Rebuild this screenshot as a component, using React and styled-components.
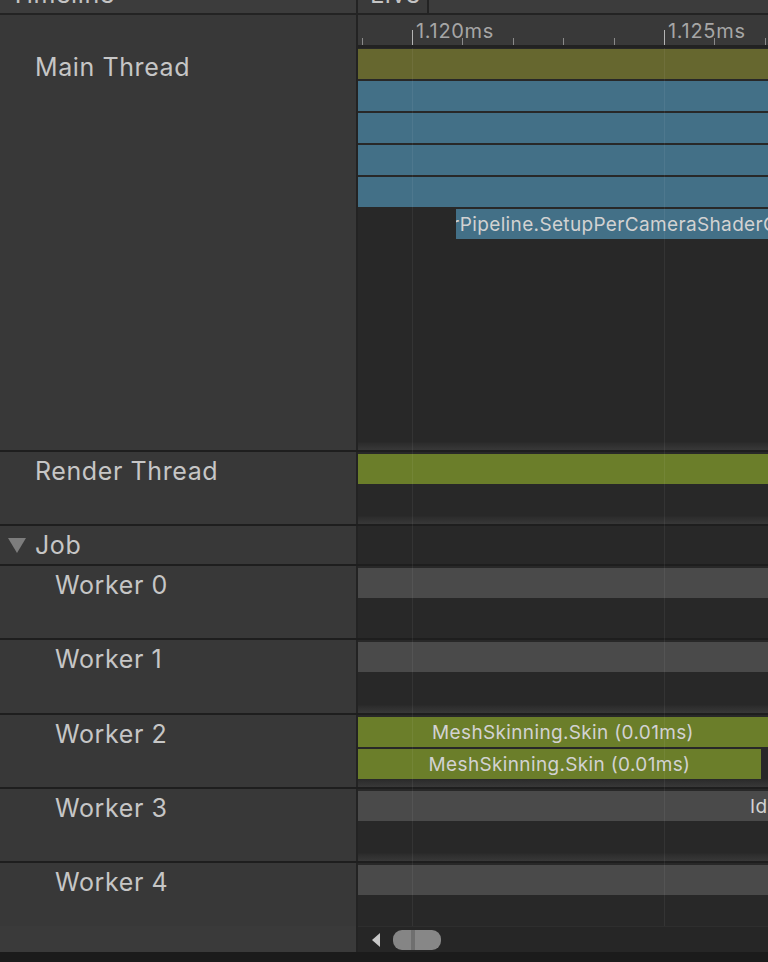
import styled, { createGlobalStyle } from 'styled-components';

const GlobalStyle = createGlobalStyle`
  body {
    margin: 0;
    background: #1b1b1b;
    font-family: Inter, 'Noto Sans', sans-serif;
  }
`;

const TICK_START = 54;
const TICK_STEP = 50.4;
const ticks = Array.from({ length: 9 }, (_, i) => i - 1).map((i) => ({
  x: Math.round(TICK_START + TICK_STEP * i),
  major: i % 5 === 0,
  label: `${(1.12 + i * 0.001).toFixed(3)}ms`,
}));

const workers = [
  { name: 'Worker 0', height: 72, bars: [{ color: '#4a4a4a' }] },
  { name: 'Worker 1', height: 73, shade: true, bars: [{ color: '#4a4a4a' }] },
  {
    name: 'Worker 2',
    height: 72,
    shade: true,
    bars: [
      { color: '#6b7e2a', text: 'MeshSkinning.Skin (0.01ms)', align: 'center' },
      { color: '#6b7e2a', text: 'MeshSkinning.Skin (0.01ms)', align: 'center', right: 7 },
    ],
  },
  {
    name: 'Worker 3',
    height: 72,
    shade: true,
    bars: [{ color: '#4a4a4a', text: 'Idle', pad: 392 }],
  },
  { name: 'Worker 4', height: 63, last: true, bars: [{ color: '#4a4a4a' }] },
];

const App = () => {
  return (
    <>
      <GlobalStyle />
      <Window>
        <Toolbar>
          <ToolbarTitle>
            <ToolbarText>Timeline</ToolbarText>
          </ToolbarTitle>
          <ToolbarButton>
            <ToolbarText>Live</ToolbarText>
          </ToolbarButton>
        </Toolbar>

        <Panes>
          {/* MAIN THREAD */}
          <Row $h={435}>
            <LabelCell $top={37} $indent={35}>
              Main Thread
            </LabelCell>
            <TrackColumn>
              <Ruler>
                <svg width="410" height="30">
                  {ticks.map((t) => (
                    <line
                      key={t.x}
                      x1={t.x + 0.5}
                      x2={t.x + 0.5}
                      y1={t.major ? 15 : 23}
                      y2={30}
                      stroke={t.major ? '#b4b4b4' : '#8a8a8a'}
                      strokeWidth="1"
                    />
                  ))}
                  {ticks
                    .filter((t) => t.major)
                    .map((t) => (
                      <text
                        key={t.label}
                        x={t.x + 4}
                        y={23}
                        fill="#a6a6a6"
                        fontSize="20"
                        letterSpacing="0.7"
                        fontFamily="Inter, sans-serif"
                      >
                        {t.label}
                      </text>
                    ))}
                </svg>
              </Ruler>
              <Track $top={1} $shade>
                <Bar $color="#66672f" />
                <Bar $color="#437087" />
                <Bar $color="#437087" />
                <Bar $color="#437087" />
                <Bar $color="#437087" />
                <Bar $color="#437087" $left={98}>
                  <BarText $shift={-4}>rPipeline.SetupPerCameraShaderConstants</BarText>
                </Bar>
              </Track>
            </TrackColumn>
          </Row>

          {/* RENDER THREAD */}
          <Row $h={72}>
            <LabelCell $top={4} $indent={35}>
              Render Thread
            </LabelCell>
            <Track $top={2} $shade>
              <Bar $color="#6b7e2a" />
            </Track>
          </Row>

          {/* JOB GROUP */}
          <Row $h={38}>
            <LabelCell $top={4} $indent={8}>
              <Caret />
              Job
            </LabelCell>
            <Track $top={2} />
          </Row>

          {/* WORKERS */}
          {workers.map((w) => (
            <Row key={w.name} $h={w.height} $last={w.last}>
              <LabelCell $top={4} $indent={55}>
                {w.name}
              </LabelCell>
              <Track $top={2} $shade={w.shade}>
                {w.bars.map((b, i) => (
                  <Bar
                    key={i}
                    $color={b.color}
                    $right={b.right}
                    $align={b.align}
                    $pad={b.pad}
                  >
                    {b.text && <BarText>{b.text}</BarText>}
                  </Bar>
                ))}
              </Track>
            </Row>
          ))}

          {/* SCROLLBAR */}
          <ScrollRow>
            <ScrollSpacer />
            <ScrollTrack>
              <ScrollArrow />
              <ScrollThumb />
            </ScrollTrack>
          </ScrollRow>

          <GridLine $x={412} />
          <GridLine $x={664} />
        </Panes>
        <StatusStrip />
      </Window>
    </>
  );
};
export default App;

const Window = styled.div`
  width: 768px;
  height: 962px;
  overflow: hidden;
  display: flex;
  flex-direction: column;
  background: #1b1b1b;
`;

const Toolbar = styled.div`
  display: flex;
  height: 13px;
  flex-shrink: 0;
  overflow: hidden;
  background: #3c3c3c;
  border-bottom: 2px solid #232323;
`;

const ToolbarTitle = styled.div`
  width: 358px;
  box-sizing: border-box;
  padding-left: 10px;
  border-right: 2px solid #232323;
  overflow: hidden;
`;

const ToolbarButton = styled.div`
  width: 71px;
  box-sizing: border-box;
  padding-left: 12px;
  border-right: 2px solid #232323;
  background: #3a3a3a;
  overflow: hidden;
`;

const ToolbarText = styled.div`
  font-size: 25px;
  line-height: 30px;
  margin-top: -21px;
  letter-spacing: 0.6px;
  color: #c4c4c4;
  white-space: nowrap;
`;

const Panes = styled.div`
  position: relative;
  display: flex;
  flex-direction: column;
  flex-shrink: 0;
`;

const Row = styled.div`
  display: flex;
  height: ${(p) => p.$h}px;
  border-bottom: ${(p) => (p.$last ? 'none' : '2px solid #1e1e1e')};
`;

const LabelCell = styled.div`
  width: 358px;
  flex-shrink: 0;
  box-sizing: border-box;
  display: flex;
  align-items: flex-start;
  gap: 9px;
  padding-top: ${(p) => p.$top}px;
  padding-left: ${(p) => p.$indent}px;
  background: #383838;
  border-right: 2px solid #232323;
  color: #c6c6c6;
  font-size: 25px;
  line-height: 30px;
  letter-spacing: 0.6px;
  white-space: nowrap;
`;

const Caret = styled.span`
  width: 0;
  height: 0;
  margin-top: 8px;
  border-left: 9px solid transparent;
  border-right: 9px solid transparent;
  border-top: 15px solid #7d7d7d;
`;

const TrackColumn = styled.div`
  flex: 1;
  min-width: 0;
  display: flex;
  flex-direction: column;
`;

const Ruler = styled.div`
  height: 30px;
  flex-shrink: 0;
  background: #393939;
  border-bottom: 3px solid #222222;
  svg {
    display: block;
  }
`;

const Track = styled.div`
  flex: 1;
  min-width: 0;
  display: flex;
  flex-direction: column;
  gap: 2px;
  padding-top: ${(p) => p.$top}px;
  overflow: hidden;
  background: ${(p) =>
    p.$shade
      ? 'linear-gradient(#282828 calc(100% - 8px), #2c2c2c calc(100% - 7px), #383838 100%)'
      : '#282828'};
`;

const Bar = styled.div`
  height: 30px;
  flex-shrink: 0;
  display: flex;
  align-items: center;
  justify-content: ${(p) => (p.$align === 'center' ? 'center' : 'flex-start')};
  margin-left: ${(p) => p.$left || 0}px;
  margin-right: ${(p) => p.$right || 0}px;
  padding-left: ${(p) => p.$pad || 0}px;
  background: ${(p) => p.$color};
  overflow: hidden;
`;

const BarText = styled.span`
  margin-left: ${(p) => p.$shift || 0}px;
  color: #d2d2d2;
  font-size: 19px;
  letter-spacing: 0.35px;
  white-space: nowrap;
`;

const ScrollRow = styled.div`
  display: flex;
  height: 26px;
`;

const ScrollSpacer = styled.div`
  width: 358px;
  flex-shrink: 0;
  box-sizing: border-box;
  background: #3a3a3a;
  border-right: 2px solid #232323;
`;

const ScrollTrack = styled.div`
  flex: 1;
  display: flex;
  align-items: center;
  gap: 13px;
  padding-left: 14px;
  background: #262626;
  border-top: 1px solid #2e2e2e;
`;

const ScrollArrow = styled.span`
  width: 0;
  height: 0;
  border-top: 7px solid transparent;
  border-bottom: 7px solid transparent;
  border-right: 8px solid #c8c8c8;
`;

const ScrollThumb = styled.span`
  width: 48px;
  height: 20px;
  border-radius: 9px;
  background: linear-gradient(
    to right,
    #858585 18px,
    #6f6f6f 18px,
    #6f6f6f 22px,
    #878787 22px
  );
`;

const GridLine = styled.div`
  position: absolute;
  top: 33px;
  bottom: 26px;
  left: ${(p) => p.$x}px;
  width: 1px;
  background: rgba(255, 255, 255, 0.06);
  pointer-events: none;
`;

const StatusStrip = styled.div`
  flex: 1;
  background: #1b1b1b;
`;
